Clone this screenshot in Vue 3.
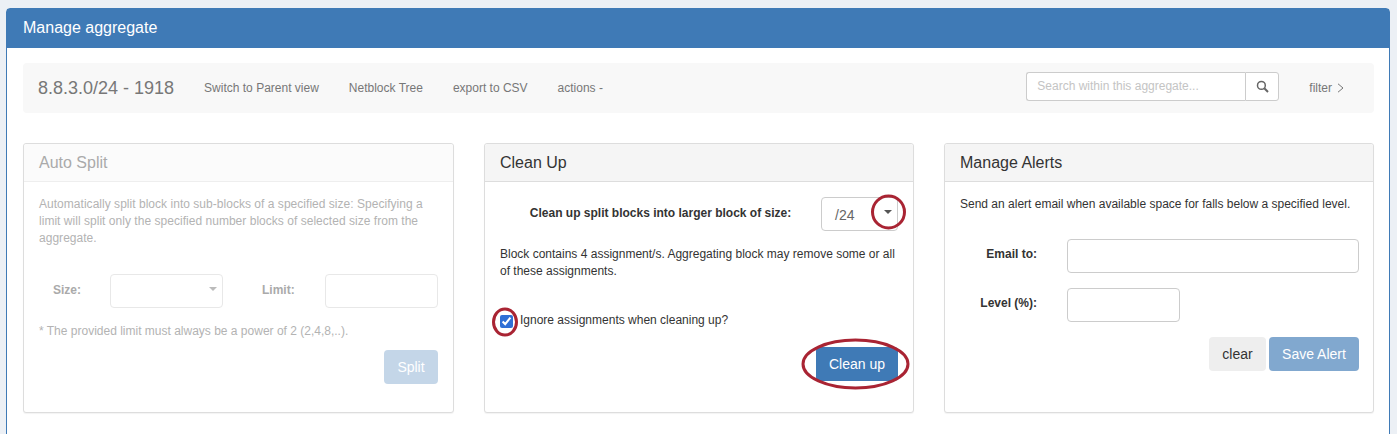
<script setup>
const links = ['Switch to Parent view', 'Netblock Tree', 'export to CSV', 'actions -']
</script>

<template>
  <div class="page">
    <section class="outer">
      <header class="outer-head">Manage aggregate</header>
      <div class="outer-body">
        <nav class="bar">
          <span class="brand">8.8.3.0/24 - 1918</span>
          <a v-for="l in links" :key="l" class="link">{{ l }}</a>
          <div class="search">
            <input class="search-input" placeholder="Search within this aggregate..." />
            <button class="search-btn" aria-label="Search">
              <svg width="13" height="13" viewBox="0 0 13 13" fill="none" stroke="#666" stroke-width="1.5">
                <circle cx="5.4" cy="5.4" r="3.9" />
                <path d="M8.3 8.3 12 12" stroke-width="2" />
              </svg>
            </button>
          </div>
          <a class="link filter">filter
            <svg width="7" height="10" viewBox="0 0 7 10" fill="none" stroke="#777" stroke-width="1"><path d="M1 .8 6 5 1 9.2" /></svg>
          </a>
        </nav>

        <div class="cards">
          <article class="card muted">
            <h3 class="card-head">Auto Split</h3>
            <div class="card-body">
              <p class="txt intro">Automatically split block into sub-blocks of a specified size: Specifying a limit will split only the specified number blocks of selected size from the aggregate.</p>
              <div class="split-row">
                <label class="lbl size-lbl">Size:</label>
                <div class="field sel split-sel"><span class="caret"></span></div>
                <label class="lbl limit-lbl">Limit:</label>
                <input class="field split-limit" />
              </div>
              <p class="txt note">* The provided limit must always be a power of 2 (2,4,8,..).</p>
              <div class="actions split-actions"><button class="btn primary split-btn">Split</button></div>
            </div>
          </article>

          <article class="card">
            <h3 class="card-head">Clean Up</h3>
            <div class="card-body">
              <div class="clean-row">
                <label class="lbl clean-lbl">Clean up split blocks into larger block of size:</label>
                <div class="field sel clean-sel"><span class="val">/24</span><span class="caret dark"></span></div>
              </div>
              <p class="txt assign">Block contains 4 assignment/s. Aggregating block may remove some or all of these assignments.</p>
              <label class="check"><input type="checkbox" checked />Ignore assignments when cleaning up?</label>
              <div class="actions clean-actions"><button class="btn primary clean-btn">Clean up</button></div>
            </div>
          </article>

          <article class="card alerts">
            <h3 class="card-head">Manage Alerts</h3>
            <div class="card-body">
              <p class="txt">Send an alert email when available space for falls below a specified level.</p>
              <div class="alert-row first">
                <label class="lbl alert-lbl">Email to:</label>
                <input class="field email" />
              </div>
              <div class="alert-row">
                <label class="lbl alert-lbl">Level (%):</label>
                <input class="field level" />
              </div>
              <div class="actions alert-actions">
                <button class="btn clear">clear</button>
                <button class="btn primary save">Save Alert</button>
              </div>
            </div>
          </article>
        </div>
      </div>
    </section>

    <svg class="marks" width="1397" height="434" viewBox="0 0 1397 434" fill="none" stroke="#a92433" stroke-width="3">
      <ellipse cx="888.5" cy="212" rx="16" ry="16" />
      <ellipse cx="505" cy="322" rx="11.5" ry="13" />
      <ellipse cx="855.5" cy="364" rx="52.5" ry="24" />
    </svg>
  </div>
</template>

<style>
html, body { margin: 0; background: #ecf0f5; overflow: hidden; }
</style>

<style scoped>
.page {
  position: relative;
  height: 434px;
  overflow: hidden;
  padding: 8px 7px 0 6px;
  box-sizing: border-box;
  font-family: "Liberation Sans", Arial, sans-serif;
  font-size: 12px;
  color: #333;
}
.outer {
  background: #fff;
  border: 1px solid #3f7ab6;
  border-radius: 4px 4px 0 0;
  height: 460px;
}
.outer-head {
  background: #3f7ab6;
  color: #fff;
  font-size: 16px;
  height: 39px;
  line-height: 38px;
  padding-left: 16px;
}
.outer-body { padding: 15px 15px 0 16px; }
.bar {
  display: flex;
  align-items: center;
  height: 50px;
  background: #f8f8f8;
  border-radius: 4px;
  padding-left: 15px;
  color: #777;
}
.brand { font-size: 18px; margin-right: 30px; }
.link { color: #777; margin-right: 30px; white-space: nowrap; }
.search { display: flex; margin-left: auto; margin-bottom: 3px; }
.search-input {
  width: 219px;
  height: 29px;
  box-sizing: border-box;
  border: 1px solid #ccc;
  border-right: 0;
  border-radius: 3px 0 0 3px;
  padding: 0 10px 2px;
  font: 12px "Liberation Sans", Arial, sans-serif;
  background: #fff;
  outline: 0;
}
.search-input::placeholder { color: #c4c4c4; opacity: 1; }
.search-btn {
  width: 34px;
  height: 29px;
  box-sizing: border-box;
  border: 1px solid #ccc;
  border-radius: 0 3px 3px 0;
  background: #fff;
  padding: 0;
  display: flex;
  align-items: center;
  justify-content: center;
}
.filter {
  margin: 0 30px 0 30px;
  display: flex;
  align-items: center;
  gap: 5px;
}
.cards {
  display: grid;
  grid-template-columns: repeat(3, 1fr);
  gap: 30px;
  margin-top: 30px;
}
.card {
  height: 270px;
  box-sizing: border-box;
  border: 1px solid #ddd;
  border-radius: 3px;
  box-shadow: 0 1px 1px rgba(0, 0, 0, .05);
  background: #fff;
}
.card-head {
  margin: 0;
  height: 37px;
  line-height: 37px;
  padding-left: 15px;
  font-size: 16px;
  font-weight: 400;
  color: #333;
  background: #f5f5f5;
  border-bottom: 1px solid #ddd;
  border-radius: 3px 3px 0 0;
}
.card-body { padding: 14px 15px 0; }
.alerts .card-body { padding-right: 14px; }
.muted .card-head { background: #fbfbfb; color: #aaa; border-bottom-color: #eee; }
.muted .txt { color: #b3b3b3; }
.muted .lbl { color: #aaa; }
.muted .field { border-color: #e8e8e8; }
.muted .caret { border-top-color: #bbb; }
.txt { margin: 0; line-height: 17px; color: #333; }
.intro { letter-spacing: .03px; }
.lbl { font-weight: 700; color: #333; white-space: nowrap; }
.field {
  height: 34px;
  box-sizing: border-box;
  border: 1px solid #ccc;
  border-radius: 4px;
  background: #fff;
  outline: 0;
  padding: 0;
}
.sel { display: flex; align-items: center; position: relative; }
.caret {
  position: absolute;
  right: 5px;
  top: 12px;
  width: 0;
  height: 0;
  border-left: 4px solid transparent;
  border-right: 4px solid transparent;
  border-top: 4px solid #888;
}
.caret.dark { border-top-color: #555; }
.split-row { display: flex; align-items: center; margin-top: 27px; }
.split-row .lbl { margin-bottom: 3px; }
.size-lbl { margin-left: 14px; width: 57px; }
.split-sel { width: 113px; }
.limit-lbl { margin-left: 39px; width: 63px; }
.split-limit { width: 113px; }
.note { margin-top: 15px; }
.actions { display: flex; justify-content: flex-end; }
.btn {
  height: 34px;
  border: 0;
  border-radius: 4px;
  font: 14px "Liberation Sans", Arial, sans-serif;
  padding: 0;
}
.primary { background: #3f7ab6; color: #fff; }
.split-actions { margin-top: 10px; }
.split-btn { width: 54px; opacity: .3; }
.clean-row { display: flex; align-items: center; margin-top: 1px; }
.clean-lbl { width: 321px; text-align: center; margin-bottom: 2px; }
.clean-sel { width: 77px; }
.val { margin: 2px 0 0 13px; font-size: 14px; color: #666; }
.assign { margin-top: 15px; }
.check {
  display: flex;
  align-items: center;
  gap: 7px;
  margin-top: 32px;
  height: 17px;
  line-height: 17px;
  color: #333;
}
.check input {
  margin: 1px 0 0;
  width: 13px;
  height: 13px;
  accent-color: #2f6fd6;
}
.clean-actions { margin-top: 18px; }
.clean-btn { width: 82px; }
.alert-row { display: flex; align-items: flex-start; margin-top: 15px; }
.alert-row.first { margin-top: 26px; }
.alert-lbl { width: 77px; text-align: right; margin-right: 30px; line-height: 30px; }
.email { width: 292px; }
.level { width: 113px; }
.alert-actions { margin-top: 15px; gap: 3px; }
.clear { width: 57px; background: #eee; color: #333; }
.save { width: 90px; opacity: .65; }
.marks { position: absolute; left: 0; top: 0; pointer-events: none; }
</style>
